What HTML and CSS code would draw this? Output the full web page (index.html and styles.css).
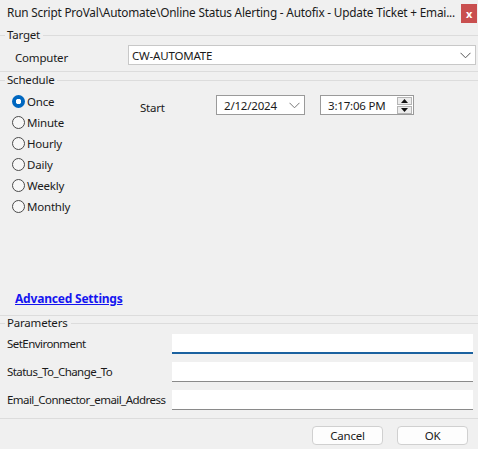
FILE: index.html
```html
<!DOCTYPE html>
<html>
<head>
<meta charset="utf-8">
<link rel="stylesheet" href="styles.css">
</head>
<body>
<div class="window">
  <div class="titlebar">
    <span class="title">Run Script ProVal\Automate\Online Status Alerting - Autofix - Update Ticket + Emai...</span>
    <span class="close">x</span>
  </div>

  <div class="legend legend-target"><span>Target</span></div>
  <div class="target-row">
    <span class="computer-label">Computer</span>
    <div class="select">
      <span>CW-AUTOMATE</span>
      <svg class="chev" width="11" height="7" viewBox="0 0 11 7"><path d="M0.5 0.8 L5.5 5.8 L10.5 0.8" fill="none" stroke="#555" stroke-width="1"/></svg>
    </div>
  </div>
  <div class="rule rule-target"></div>

  <div class="legend legend-schedule"><span>Schedule</span></div>
  <div class="schedule">
    <div class="radios">
      <div class="radio-row"><span class="radio checked"></span><span>Once</span></div>
      <div class="radio-row"><span class="radio"></span><span>Minute</span></div>
      <div class="radio-row"><span class="radio"></span><span>Hourly</span></div>
      <div class="radio-row"><span class="radio"></span><span>Daily</span></div>
      <div class="radio-row"><span class="radio"></span><span>Weekly</span></div>
      <div class="radio-row"><span class="radio"></span><span>Monthly</span></div>
    </div>
    <div class="start">
      <span class="start-label">Start</span>
      <div class="date">
        <span>2/12/2024</span>
        <svg class="chev" width="11" height="7" viewBox="0 0 11 7"><path d="M0.5 0.8 L5.5 5.8 L10.5 0.8" fill="none" stroke="#777" stroke-width="1"/></svg>
      </div>
      <div class="time">
        <span>3:17:06 PM</span>
        <div class="spin">
          <div class="spin-btn"><svg width="7" height="4" viewBox="0 0 7 4"><path d="M0 4 L3.5 0 L7 4 Z" fill="#111"/></svg></div>
          <div class="spin-btn"><svg width="7" height="4" viewBox="0 0 7 4"><path d="M0 0 L3.5 4 L7 0 Z" fill="#111"/></svg></div>
        </div>
      </div>
    </div>
  </div>
  <div class="advanced"><a class="adv-link">Advanced Settings</a></div>
  <div class="rule rule-schedule"></div>

  <div class="legend legend-params"><span>Parameters</span></div>
  <div class="params">
    <div class="param-row"><span class="param-label">SetEnvironment</span><div class="input focused"></div></div>
    <div class="param-row"><span class="param-label">Status_To_Change_To</span><div class="input"></div></div>
    <div class="param-row"><span class="param-label">Email_Connector_email_Address</span><div class="input"></div></div>
  </div>
  <div class="rule rule-params"></div>

  <div class="buttons">
    <div class="btn">Cancel</div>
    <div class="btn">OK</div>
  </div>
</div>
</body>
</html>
```

FILE: styles.css
```css
html, body {
  margin: 0;
  padding: 0;
  background: #f0f0f0;
}
body {
  font-family: "Noto Sans", "Open Sans", sans-serif;
  font-size: 11.5px;
  letter-spacing: -0.2px;
  color: #1a1a1a;
}
.window {
  width: 478px;
  height: 449px;
  display: flex;
  flex-direction: column;
  overflow: hidden;
}
.titlebar {
  height: 28px;
  display: flex;
  align-items: flex-start;
  flex-shrink: 0;
}
.title {
  padding-left: 7px;
  margin-top: 4px;
  line-height: 16px;
  font-size: 11.8px;
  white-space: nowrap;
  overflow: hidden;
  flex: 1;
  min-width: 0;
}
.close {
  width: 16px;
  height: 19px;
  margin-top: 4px;
  margin-right: 1px;
  margin-left: 3px;
  background: #c94f4f;
  color: #fff;
  font-weight: bold;
  font-size: 11px;
  display: flex;
  align-items: center;
  justify-content: center;
  flex-shrink: 0;
}
.legend {
  display: flex;
  align-items: center;
  height: 14px;
  line-height: 14px;
  flex-shrink: 0;
}
.legend::before {
  content: "";
  width: 5px;
  border-top: 1px solid #dcdcdc;
  margin-right: 2px;
}
.legend::after {
  content: "";
  flex: 1;
  border-top: 1px solid #dcdcdc;
  margin-left: 3px;
}
.rule {
  border-top: 1px solid #dcdcdc;
  flex-shrink: 0;
}
.target-row {
  display: flex;
  align-items: center;
  margin-top: 3px;
  height: 20px;
}
.computer-label {
  width: 113px;
  padding-left: 15px;
  padding-top: 4px;
}
.select {
  width: 348px;
  height: 20px;
  box-sizing: border-box;
  background: #fff;
  border: 1px solid #c8c8c8;
  display: flex;
  align-items: center;
  padding-left: 3px;
  padding-right: 4px;
}
.select span { flex: 1; }
.rule-target { margin-top: 6px; }
.legend-schedule { margin-top: 1px; }
.schedule {
  display: flex;
  margin-top: 4px;
}
.radios {
  display: flex;
  flex-direction: column;
  padding-left: 12px;
  width: 128px;
}
.radio-row {
  display: flex;
  align-items: center;
  height: 21px;
  gap: 2px;
}
.radio {
  width: 13px;
  height: 13px;
  box-sizing: border-box;
  border-radius: 50%;
  border: 1px solid #4a4a4a;
  background: #f7f7f7;
}
.radio.checked {
  border: none;
  background: radial-gradient(circle, #fff 0 2.5px, #0067c0 3px);
}
.start {
  display: flex;
  align-items: flex-start;
  margin-top: 4px;
}
.start-label {
  width: 76px;
  padding-top: 5px;
}
.date {
  width: 89px;
  height: 20px;
  box-sizing: border-box;
  background: #fff;
  border: 1px solid #9a9a9a;
  display: flex;
  align-items: center;
  padding-left: 7px;
  padding-right: 4px;
  margin-right: 15px;
}
.date span { flex: 1; }
.time {
  width: 94px;
  height: 20px;
  box-sizing: border-box;
  background: #fff;
  border: 1px solid #9a9a9a;
  display: flex;
  align-items: center;
  padding-left: 7px;
  padding-right: 1px;
}
.time span { flex: 1; }
.spin {
  display: flex;
  flex-direction: column;
  gap: 1px;
}
.spin-btn {
  width: 15px;
  height: 8px;
  box-sizing: border-box;
  border: 1px solid #b5b5b5;
  background: #ececec;
  display: flex;
  align-items: center;
  justify-content: center;
}
.advanced {
  margin-top: 72px;
  padding-left: 15px;
  height: 20px;
  line-height: 20px;
}
.adv-link {
  color: #1515f0;
  font-weight: bold;
  font-size: 12px;
  text-decoration: underline;
}
.rule-schedule { margin-top: 6px; }
.legend-params { margin-top: 0px; }
.params {
  display: flex;
  flex-direction: column;
  gap: 8px;
  margin-top: 4px;
}
.param-row {
  display: flex;
  align-items: center;
  height: 20px;
}
.param-label {
  width: 165px;
  padding-left: 7px;
  padding-bottom: 2px;
  white-space: nowrap;
  letter-spacing: -0.55px;
}
.input {
  width: 301px;
  height: 20px;
  box-sizing: border-box;
  background: #fff;
  border-bottom: 1px solid #8a8a8a;
}
.input.focused {
  border-bottom: 2px solid #1b62a0;
}
.rule-params { margin-top: 8px; }
.buttons {
  display: flex;
  justify-content: flex-end;
  gap: 14px;
  padding-right: 10px;
  margin-top: 7px;
}
.btn {
  width: 71px;
  height: 19px;
  box-sizing: border-box;
  border: 1px solid #d0d0d0;
  border-radius: 4px;
  background: #fdfdfd;
  display: flex;
  align-items: center;
  justify-content: center;
}
```
